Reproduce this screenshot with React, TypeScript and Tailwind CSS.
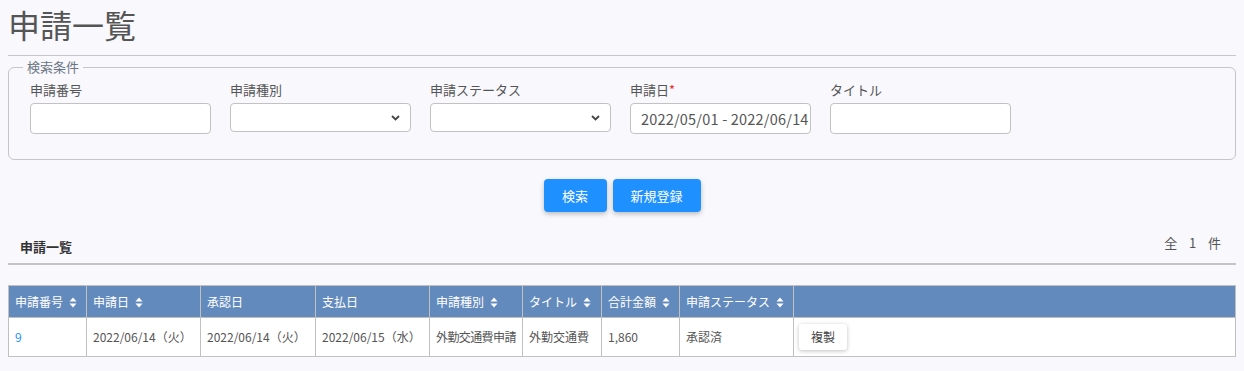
import React from 'react';

const SortIcon = () => (
  <svg width="8" height="11" viewBox="0 0 8 11" className="inline-block ml-[6px] align-[-1px]">
    <path d="M4 0.5 L7.5 4.5 H0.5 Z" fill="white" />
    <path d="M4 10.5 L7.5 6.5 H0.5 Z" fill="white" />
  </svg>
);

const Chevron = () => (
  <svg width="9" height="6" viewBox="0 0 9 6" className="absolute right-[10px] top-1/2 -translate-y-1/2">
    <path d="M1 1 L4.5 4.5 L8 1" stroke="#444" strokeWidth="1.8" fill="none" />
  </svg>
);

const App = () => {
  const fields = [
    { label: '申請番号', kind: 'text' },
    { label: '申請種別', kind: 'select' },
    { label: '申請ステータス', kind: 'select' },
    { label: '申請日', kind: 'date', required: true },
    { label: 'タイトル', kind: 'text' }
  ];

  const columns = [
    { name: '申請番号', width: 'w-[78px]', sort: true },
    { name: '申請日', width: 'w-[114px]', sort: true },
    { name: '承認日', width: 'w-[115px]', sort: false },
    { name: '支払日', width: 'w-[114px]', sort: false },
    { name: '申請種別', width: 'w-[93px]', sort: true },
    { name: 'タイトル', width: 'w-[79px]', sort: true },
    { name: '合計金額', width: 'w-[78px]', sort: true },
    { name: '申請ステータス', width: 'w-[114px]', sort: true },
    { name: '', width: '', sort: false }
  ];

  const row = ['9', '2022/06/14（火）', '2022/06/14（火）', '2022/06/15（水）', '外勤交通費申請', '外勤交通費', '1,860', '承認済'];

  return (
    <div className="w-full h-[371px] bg-[#f8f8fd] px-2 font-['Noto_Sans_CJK_JP',sans-serif] text-[#555]">
      <h1 className="pt-[4px] text-[32px] leading-[40px] text-[#555] font-normal">申請一覧</h1>
      <div className="mt-[11px] border-t border-[#c8c8c8]" />

      {/* 検索条件 */}
      <fieldset className="mt-[1px] border border-[#c6c6c6] rounded-[6px] px-[14px] pb-[25px]">
        <legend className="ml-0 px-1 text-[13px] leading-[20px] text-[#6b7684]">検索条件</legend>
        <div className="flex gap-[19px] pl-[7px] pt-[4px]">
          {fields.map((f) => (
            <div key={f.label} className="w-[181px]">
              <div className="text-[13px] leading-[18px] text-[#555] mb-[4px]">
                {f.label}
                {f.required && <span className="text-[#f03030]">*</span>}
              </div>
              <div className={`relative bg-white border border-[#c2c2c2] rounded-[4px] ${f.kind === 'select' ? 'h-[29px]' : 'h-[31px]'}`}>
                {f.kind === 'select' && <Chevron />}
                {f.kind === 'date' && (
                  <span className="absolute left-[10px] top-1/2 -translate-y-1/2 text-[14.5px] tracking-[0.2px] text-[#555] whitespace-nowrap">
                    2022/05/01 - 2022/06/14
                  </span>
                )}
              </div>
            </div>
          ))}
        </div>
      </fieldset>

      {/* buttons */}
      <div className="flex justify-center gap-[6px] mt-[19px]">
        <button className="w-[63px] h-[33px] bg-[#1e90ff] text-white text-[13px] rounded-[4px] shadow-[0_2px_5px_rgba(0,0,0,0.25)]">検索</button>
        <button className="w-[88px] h-[33px] bg-[#1e90ff] text-white text-[13px] rounded-[4px] shadow-[0_2px_5px_rgba(0,0,0,0.25)]">新規登録</button>
      </div>

      {/* 一覧 header */}
      <div className="mt-[23px] h-[30px] flex items-start justify-between pl-[12px] pr-[13px] border-b-2 border-[#c4c4c4]">
        <span className="text-[13px] font-bold text-[#333] leading-[18px] mt-[3px]">申請一覧</span>
        <span className="text-[13px] text-[#555] leading-[18px] -mt-[1px] tracking-[2px]">全&nbsp;&nbsp;1&nbsp;&nbsp;件</span>
      </div>

      {/* table */}
      <table className="mt-[20px] w-full table-fixed border-collapse text-[12px]">
        <thead>
          <tr className="bg-[#638abd] h-[32px]">
            {columns.map((c, i) => (
              <th key={i} className={`${c.width} border border-[#c0c0c0] text-left font-normal text-white px-[6px] whitespace-nowrap`}>
                {c.name}
                {c.sort && <SortIcon />}
              </th>
            ))}
          </tr>
        </thead>
        <tbody>
          <tr className="bg-white h-[39px]">
            {row.map((v, i) => (
              <td
                key={i}
                className={`border border-[#c0c0c0] whitespace-nowrap overflow-hidden ${i === 4 ? 'pl-[6px] pr-0 tracking-[-0.6px]' : 'px-[6px]'} ${i === 0 ? 'text-[#1e90ff]' : 'text-[#555]'}`}
              >
                {v}
              </td>
            ))}
            <td className="border border-[#c0c0c0] px-[5px]">
              <button className="w-[48px] h-[26px] bg-white text-[12px] text-[#444] rounded-[3px] shadow-[0_1px_4px_rgba(0,0,0,0.25)]">複製</button>
            </td>
          </tr>
        </tbody>
      </table>
    </div>
  );
};

export default App;
